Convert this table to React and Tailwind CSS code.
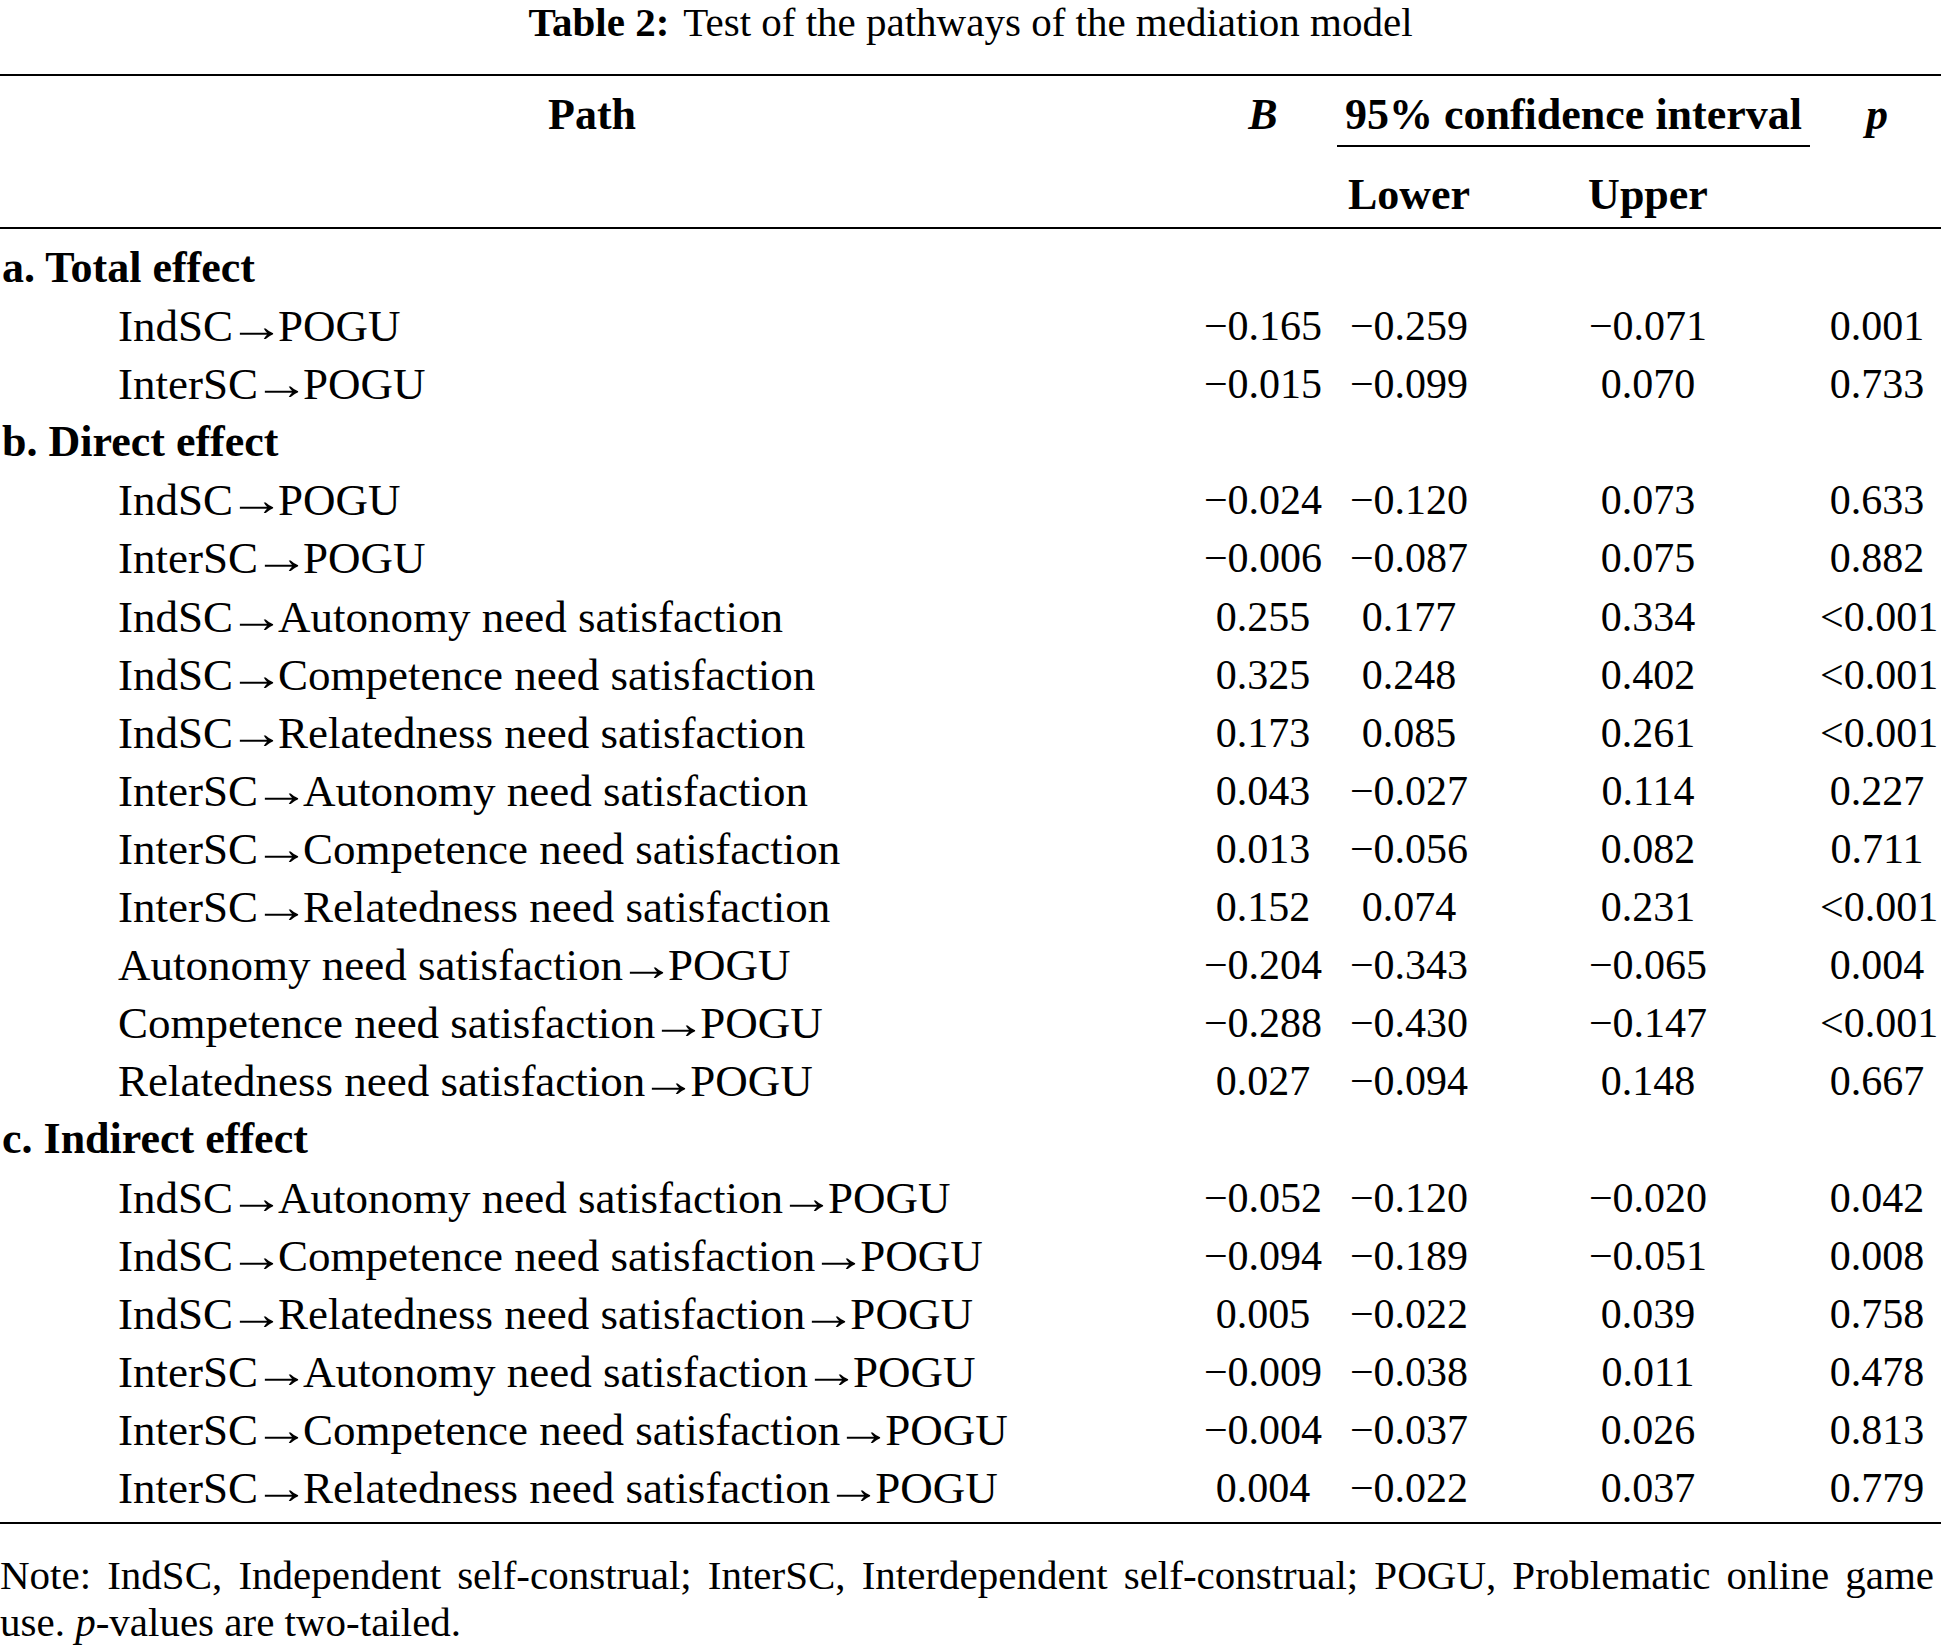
import React from "react";

const M = "\u2212";

const sections = [
  {
    label: "a. Total effect",
    rows: [
      [["IndSC", "POGU"], `${M}0.165`, `${M}0.259`, `${M}0.071`, "0.001"],
      [["InterSC", "POGU"], `${M}0.015`, `${M}0.099`, "0.070", "0.733"],
    ],
  },
  {
    label: "b. Direct effect",
    rows: [
      [["IndSC", "POGU"], `${M}0.024`, `${M}0.120`, "0.073", "0.633"],
      [["InterSC", "POGU"], `${M}0.006`, `${M}0.087`, "0.075", "0.882"],
      [["IndSC", "Autonomy need satisfaction"], "0.255", "0.177", "0.334", "<0.001"],
      [["IndSC", "Competence need satisfaction"], "0.325", "0.248", "0.402", "<0.001"],
      [["IndSC", "Relatedness need satisfaction"], "0.173", "0.085", "0.261", "<0.001"],
      [["InterSC", "Autonomy need satisfaction"], "0.043", `${M}0.027`, "0.114", "0.227"],
      [["InterSC", "Competence need satisfaction"], "0.013", `${M}0.056`, "0.082", "0.711"],
      [["InterSC", "Relatedness need satisfaction"], "0.152", "0.074", "0.231", "<0.001"],
      [["Autonomy need satisfaction", "POGU"], `${M}0.204`, `${M}0.343`, `${M}0.065`, "0.004"],
      [["Competence need satisfaction", "POGU"], `${M}0.288`, `${M}0.430`, `${M}0.147`, "<0.001"],
      [["Relatedness need satisfaction", "POGU"], "0.027", `${M}0.094`, "0.148", "0.667"],
    ],
  },
  {
    label: "c. Indirect effect",
    rows: [
      [["IndSC", "Autonomy need satisfaction", "POGU"], `${M}0.052`, `${M}0.120`, `${M}0.020`, "0.042"],
      [["IndSC", "Competence need satisfaction", "POGU"], `${M}0.094`, `${M}0.189`, `${M}0.051`, "0.008"],
      [["IndSC", "Relatedness need satisfaction", "POGU"], "0.005", `${M}0.022`, "0.039", "0.758"],
      [["InterSC", "Autonomy need satisfaction", "POGU"], `${M}0.009`, `${M}0.038`, "0.011", "0.478"],
      [["InterSC", "Competence need satisfaction", "POGU"], `${M}0.004`, `${M}0.037`, "0.026", "0.813"],
      [["InterSC", "Relatedness need satisfaction", "POGU"], "0.004", `${M}0.022`, "0.037", "0.779"],
    ],
  },
];

const cols = "grid grid-cols-[1184px_158px_134px_344px_114px]";

// Liberation Serif's arrow is short; stretch it a little inside its own advance
function Path({ parts }) {
  return parts.map((p, i) => (
    <React.Fragment key={i}>
      {i > 0 && (
        <span className="inline-block scale-x-[1.25] translate-x-[1px] origin-center">→</span>
      )}
      {p}
    </React.Fragment>
  ));
}

function Row({ parts, values }) {
  return (
    <div className={`${cols} h-[58.12px] items-center`}>
      <div className="pl-[118px] text-[45px] leading-[58px] whitespace-nowrap">
        <Path parts={parts} />
      </div>
      {values.map((v, i) => (
        <div key={i} className="text-center text-[42px] leading-[58px] whitespace-nowrap">
          {v}
        </div>
      ))}
    </div>
  );
}

export default function App() {
  return (
    <div className="w-[1941px] bg-white text-black font-['Liberation_Serif',serif]">
      <div className="h-[44px] text-center text-[41px] leading-[44px] whitespace-nowrap">
        <span className="font-bold">Table 2:</span>
        <span className="ml-[14px]">Test of the pathways of the mediation model</span>
      </div>

      <div className="mt-[30px] h-[2px] bg-black" />

      {/* header */}
      <div className={`${cols} h-[71px] font-bold text-[44px] leading-[46px]`}>
        <div className="pt-[16px] text-center">Path</div>
        <div className="pt-[16px] text-center italic">B</div>
        <div className="col-span-2">
          <div className="ml-[-5px] w-[473px] h-[71px] pt-[16px] border-b-2 border-black text-center whitespace-nowrap">
            95% confidence interval
          </div>
        </div>
        <div className="pt-[16px] text-center italic">p</div>
      </div>
      <div className={`${cols} h-[80px] font-bold text-[44px] leading-[46px]`}>
        <div />
        <div />
        <div className="pt-[25px] text-center">Lower</div>
        <div className="pt-[25px] text-center">Upper</div>
        <div />
      </div>

      <div className="h-[2px] bg-black" />

      <div className="pt-[9.8px] pb-[4.5px]">
        {sections.map((s) => (
          <div key={s.label}>
            <div className="h-[58.12px] pl-[2px] font-bold text-[44px] leading-[58px] whitespace-nowrap">
              {s.label}
            </div>
            {s.rows.map((r, i) => (
              <Row key={i} parts={r[0]} values={r.slice(1)} />
            ))}
          </div>
        ))}
      </div>

      <div className="h-[2px] bg-black" />

      <div className="mt-[28px] w-[1934px] text-[41px] leading-[47px]">
        <div className="text-justify [text-align-last:justify] whitespace-nowrap">
          Note: IndSC, Independent self-construal; InterSC, Interdependent self-construal; POGU, Problematic online game
        </div>
        <div>
          use. <span className="italic">p</span>-values are two-tailed.
        </div>
      </div>
    </div>
  );
}
